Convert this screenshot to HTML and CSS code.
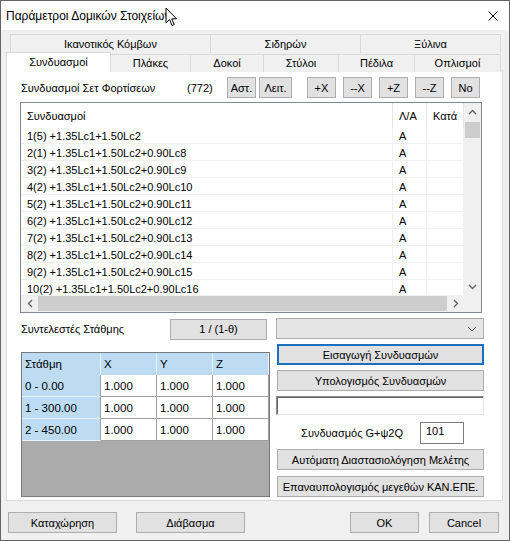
FILE: index.html
```html
<!DOCTYPE html>
<html>
<head>
	<meta charset="utf-8">
	<title>Παράμετροι Δομικών Στοιχείων</title>
	<link rel="stylesheet" href="styles.css">
</head>
<body>
<div class="window">
	<div class="titlebar">
		<span class="title">Παράμετροι Δομικών Στοιχείων</span>
		<svg class="close" width="10" height="10" viewBox="0 0 10 10">
			<path d="M0.5 0.5 L9.5 9.5 M9.5 0.5 L0.5 9.5" stroke="#000" stroke-width="1" fill="none"/>
		</svg>
		<svg class="cursor" width="13" height="20" viewBox="0 0 13 20">
			<path d="M1 1 L1 16 L4.5 12.5 L7 18.5 L9.2 17.6 L6.8 11.8 L11.5 11.8 Z" fill="#fff" stroke="#000" stroke-width="1" stroke-linejoin="round"/>
		</svg>
	</div>

	<div class="tabs">
		<div class="tabrow back">
			<div class="tab">Ικανοτικός Κόμβων</div>
			<div class="tab">Σιδηρών</div>
			<div class="tab">Ξύλινα</div>
		</div>
		<div class="tabrow front">
			<div class="tab active">Συνδυασμοί</div>
			<div class="tab">Πλάκες</div>
			<div class="tab">Δοκοί</div>
			<div class="tab">Στύλοι</div>
			<div class="tab">Πέδιλα</div>
			<div class="tab">Οπλισμοί</div>
		</div>
	</div>

	<div class="panel">
		<div class="setrow">
			<span class="set-label">Συνδυασμοί Σετ Φορτίσεων</span>
			<span class="set-count">(772)</span>
			<button class="btn b-ast">Αστ.</button>
			<button class="btn b-leit">Λειτ.</button>
			<button class="btn b-dir">+X</button>
			<button class="btn b-dir">--X</button>
			<button class="btn b-dir">+Z</button>
			<button class="btn b-dir">--Z</button>
			<button class="btn b-dir">No</button>
		</div>

		<div class="list">
			<div class="list-body">
				<div class="lrow lhead">
					<span>Συνδυασμοί</span><span>Λ/Α</span><span>Κατά</span>
				</div>
				<div class="lrow"><span>1(5) +1.35Lc1+1.50Lc2</span><span>A</span><span></span></div>
				<div class="lrow"><span>2(1) +1.35Lc1+1.50Lc2+0.90Lc8</span><span>A</span><span></span></div>
				<div class="lrow"><span>3(2) +1.35Lc1+1.50Lc2+0.90Lc9</span><span>A</span><span></span></div>
				<div class="lrow"><span>4(2) +1.35Lc1+1.50Lc2+0.90Lc10</span><span>A</span><span></span></div>
				<div class="lrow"><span>5(2) +1.35Lc1+1.50Lc2+0.90Lc11</span><span>A</span><span></span></div>
				<div class="lrow"><span>6(2) +1.35Lc1+1.50Lc2+0.90Lc12</span><span>A</span><span></span></div>
				<div class="lrow"><span>7(2) +1.35Lc1+1.50Lc2+0.90Lc13</span><span>A</span><span></span></div>
				<div class="lrow"><span>8(2) +1.35Lc1+1.50Lc2+0.90Lc14</span><span>A</span><span></span></div>
				<div class="lrow"><span>9(2) +1.35Lc1+1.50Lc2+0.90Lc15</span><span>A</span><span></span></div>
				<div class="lrow"><span>10(2) +1.35Lc1+1.50Lc2+0.90Lc16</span><span>A</span><span></span></div>
			</div>
			<div class="vscroll">
				<div class="arrow">
					<svg width="9" height="6" viewBox="0 0 9 6"><path d="M1 5 L4.5 1.5 L8 5" stroke="#606060" stroke-width="1.3" fill="none"/></svg>
				</div>
				<div class="vthumb"></div>
				<div class="arrow bottom">
					<svg width="9" height="6" viewBox="0 0 9 6"><path d="M1 1 L4.5 4.5 L8 1" stroke="#606060" stroke-width="1.3" fill="none"/></svg>
				</div>
			</div>
			<div class="hscroll">
				<div class="arrow">
					<svg width="6" height="9" viewBox="0 0 6 9"><path d="M5 1 L1.5 4.5 L5 8" stroke="#606060" stroke-width="1.3" fill="none"/></svg>
				</div>
				<div class="hthumb"></div>
				<div class="arrow">
					<svg width="6" height="9" viewBox="0 0 6 9"><path d="M1 1 L4.5 4.5 L1 8" stroke="#606060" stroke-width="1.3" fill="none"/></svg>
				</div>
			</div>
			<div class="corner"></div>
		</div>

		<div class="lower">
			<div class="left-col">
				<div class="stathmi-row">
					<span class="stathmi-label">Συντελεστές Στάθμης</span>
					<button class="btn b-theta">1 / (1-θ)</button>
				</div>
				<div class="levels">
					<div class="levels-grid">
						<div class="cell hd">Στάθμη</div>
						<div class="cell hd">X</div>
						<div class="cell hd">Y</div>
						<div class="cell hd">Z</div>

						<div class="cell rh">0 - 0.00</div>
						<div class="cell">1.000</div>
						<div class="cell">1.000</div>
						<div class="cell">1.000</div>

						<div class="cell rh">1 - 300.00</div>
						<div class="cell">1.000</div>
						<div class="cell">1.000</div>
						<div class="cell">1.000</div>

						<div class="cell rh">2 - 450.00</div>
						<div class="cell">1.000</div>
						<div class="cell">1.000</div>
						<div class="cell">1.000</div>
					</div>
				</div>
			</div>

			<div class="right-col">
				<div class="dropdown">
					<svg width="10" height="6" viewBox="0 0 10 6"><path d="M1 1 L5 5 L9 1" stroke="#606060" stroke-width="1" fill="none"/></svg>
				</div>
				<button class="btn rbtn default">Εισαγωγή Συνδυασμών</button>
				<button class="btn rbtn">Υπολογισμός Συνδυασμών</button>
				<div class="textbox"></div>
				<div class="g-row">
					<span class="g-label">Συνδυασμός G+ψ2Q</span>
					<div class="g-input">101</div>
				</div>
				<button class="btn rbtn auto">Αυτόματη Διαστασιολόγηση Μελέτης</button>
				<button class="btn rbtn recalc">Επαναυπολογισμός μεγεθών ΚΑΝ.ΕΠΕ.</button>
			</div>
		</div>
	</div>

	<div class="footer">
		<button class="btn f-wide">Καταχώρηση</button>
		<button class="btn f-wide f-read">Διάβασμα</button>
		<button class="btn f-ok">OK</button>
		<button class="btn f-cancel">Cancel</button>
	</div>
</div>
</body>
</html>
```

FILE: styles.css
```css
body {
	margin: 0;
	font-family: "Liberation Sans", Arial, sans-serif;
	font-size: 11px;
	color: #000;
	background: #f0f0f0;
}
.window {
	width: 510px;
	height: 541px;
	box-sizing: border-box;
	border: 1px solid #646464;
	background: #f0f0f0;
}
.titlebar {
	height: 29px;
	background: #fff;
	display: flex;
	align-items: center;
	padding-left: 5px;
	position: relative;
	font-size: 12px;
}
.close {
	margin-left: auto;
	margin-right: 11px;
}
.cursor {
	position: absolute;
	left: 164px;
	top: 6px;
}

/* tabs */
.tabs {
	margin: 4px 0 0 5px;
}
.tabrow {
	display: grid;
	height: 18px;
}
.tabrow.back {
	grid-template-columns: 200px 150px 140px;
	padding-left: 4px;
}
.tabrow.front {
	grid-template-columns: 104px 80px 73px 75px 76px 86px;
}
.tab {
	border: 1px solid #d9d9d9;
	border-bottom: none;
	margin-right: -1px;
	background: #f0f0f0;
	text-align: center;
	line-height: 18px;
}
.tabrow.front .tab {
	margin-top: 2px;
	line-height: 16px;
}
.tabrow.front .tab.active {
	margin-top: 0;
	height: 19px;
	line-height: 18px;
	background: #fff;
	position: relative;
	z-index: 1;
}

.panel {
	width: 497px;
	height: 431px;
	margin-left: 5px;
	box-sizing: border-box;
	border: 1px solid #d9d9d9;
	background: #fff;
	padding: 6px 0 0 13px;
}

.btn {
	font: inherit;
	color: #000;
	background: #e1e1e1;
	border: 1px solid #adadad;
	height: 21px;
	padding: 0;
	box-sizing: border-box;
	white-space: nowrap;
}

/* set row */
.setrow {
	display: flex;
	align-items: center;
	height: 21px;
}
.set-label {
	width: 166px;
	margin-left: 1px;
}
.set-count {
	width: 40px;
}
.b-ast {
	width: 29px;
}
.b-leit {
	width: 33px;
	margin-left: 3px;
}
.b-dir {
	width: 29px;
	margin-left: 7px;
}
.b-leit + .b-dir {
	margin-left: 15px;
}

/* list */
.list {
	width: 462px;
	height: 211px;
	margin-top: 4px;
	box-sizing: border-box;
	border: 1px solid #828790;
	display: grid;
	grid-template-columns: 443px 17px;
	grid-template-rows: 192px 17px;
	overflow: hidden;
}
.list-body {
	overflow: hidden;
}
.lrow {
	display: grid;
	grid-template-columns: 372px 34px 37px;
	height: 17px;
	line-height: 17px;
	border-bottom: 1px solid #f0f0f0;
	box-sizing: border-box;
	white-space: nowrap;
}
.lrow span {
	padding: 1px 0 0 6px;
	border-right: 1px solid #f0f0f0;
	overflow: hidden;
}
.lrow.lhead {
	height: 24px;
	line-height: 24px;
	border-bottom: none;
}
.lrow.lhead span {
	border-right-color: #e5e5e5;
}
.vscroll {
	background: #f0f0f0;
	display: flex;
	flex-direction: column;
}
.arrow {
	width: 17px;
	height: 17px;
	display: flex;
	align-items: center;
	justify-content: center;
	flex: none;
}
.arrow.bottom {
	margin-top: auto;
}
.vthumb {
	height: 16px;
	margin: 2px 1px 0;
	background: #cdcdcd;
}
.hscroll {
	background: #f0f0f0;
	display: flex;
}
.hthumb {
	flex: 1;
	margin: 1px 0;
	background: #cdcdcd;
}
.corner {
	background: #f0f0f0;
}

/* lower section */
.lower {
	display: grid;
	grid-template-columns: 256px 208px;
	margin-top: 5px;
}
.stathmi-row {
	display: flex;
	align-items: center;
	height: 22px;
}
.stathmi-label {
	width: 149px;
	margin-left: 1px;
}
.b-theta {
	width: 97px;
}
.levels {
	width: 249px;
	height: 145px;
	margin: 12px 0 0 1px;
	box-sizing: border-box;
	border: 1px solid #7a7a7a;
	background: #ababab;
}
.levels-grid {
	display: grid;
	grid-template-columns: 79px 56px 56px 56px;
	grid-auto-rows: 22px;
}
.cell {
	background: #fff;
	border-right: 1px solid #a0a0a0;
	border-bottom: 1px solid #a0a0a0;
	padding-left: 3px;
	line-height: 22px;
	box-sizing: border-box;
	font-size: 11.5px;
}
.cell.hd {
	background: #bddcf3;
	border-right-color: #e6f1fa;
	height: 23px;
	line-height: 23px;
}
.cell.rh {
	background: #bddcf3;
	border-bottom-color: #e6f1fa;
}

.dropdown {
	height: 21px;
	box-sizing: border-box;
	border: 1px solid #acacac;
	background: #e5e5e5;
	display: flex;
	align-items: center;
	justify-content: flex-end;
	padding-right: 6px;
}
.rbtn {
	display: block;
	width: 207px;
	margin: 5px 0 0 1px;
}
.rbtn.default {
	border: 2px solid #1a6fc0;
}
.rbtn.recalc {
	margin-top: 6px;
}
.textbox {
	height: 19px;
	margin-top: 5px;
	box-sizing: border-box;
	background: #fff;
	border: 1px solid;
	border-color: #8a8a8a #e3e3e3 #e3e3e3 #8a8a8a;
	box-shadow: inset 1px 1px #696969;
}
.g-row {
	display: flex;
	align-items: center;
	justify-content: flex-end;
	height: 22px;
	margin-top: 7px;
}
.g-label {
	margin-right: 17px;
}
.g-input {
	width: 44px;
	height: 22px;
	box-sizing: border-box;
	border: 1px solid #7a7a7a;
	background: #fff;
	padding: 2px 0 0 5px;
	margin-right: 20px;
}

/* footer */
.footer {
	display: flex;
	margin-top: 11px;
	padding: 0 10px 0 7px;
}
.footer .btn {
	height: 21px;
}
.f-wide {
	width: 109px;
}
.f-read {
	margin-left: 19px;
}
.f-ok {
	width: 69px;
	margin-left: auto;
}
.f-cancel {
	width: 70px;
	margin-left: 10px;
}
```
